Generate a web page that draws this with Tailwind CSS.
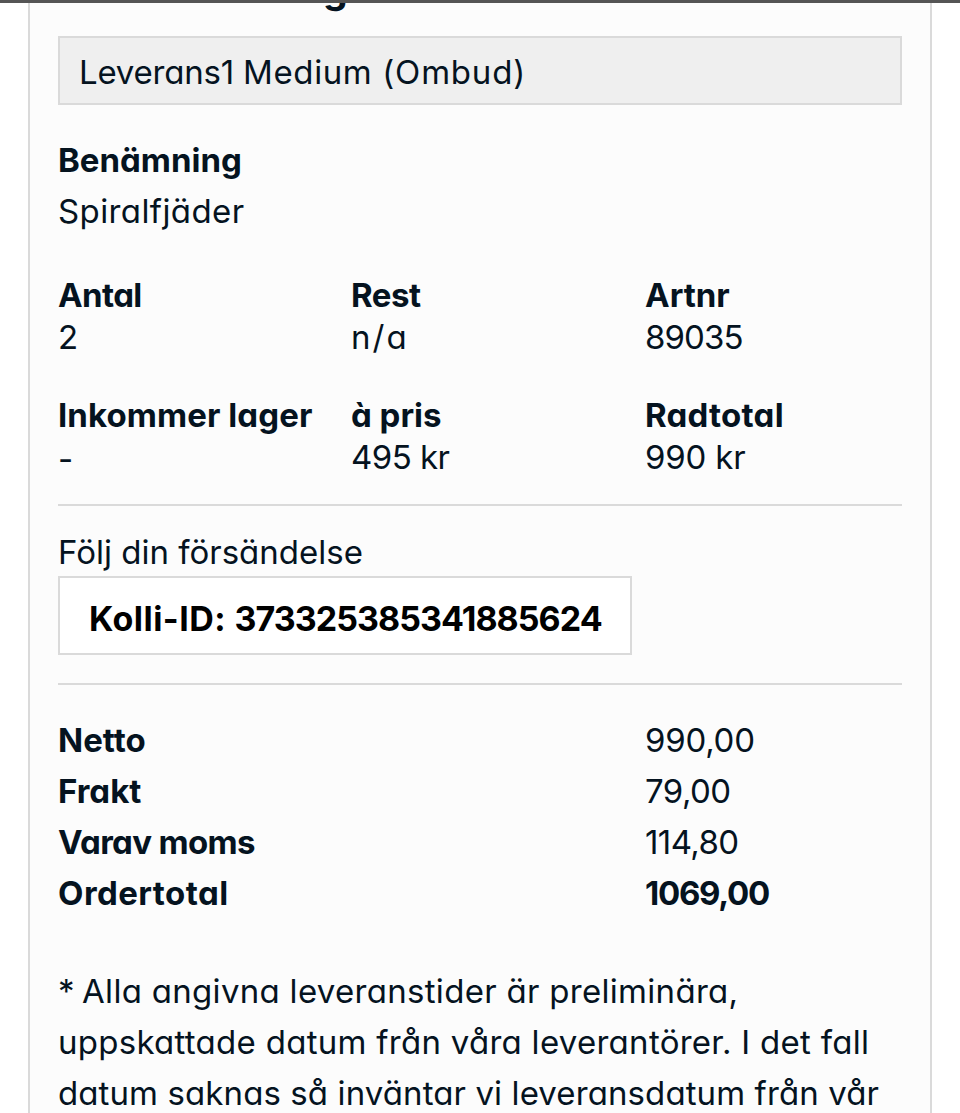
<!DOCTYPE html>
<html lang="sv">
<head>
  <meta charset="UTF-8">
  <meta name="viewport" content="width=device-width, initial-scale=1.0">
  <title>Order</title>
  <script src="https://cdn.jsdelivr.net/npm/@tailwindcss/browser@4"></script>
</head>
<body class="bg-white font-['Inter','Liberation_Sans',sans-serif] [font-feature-settings:'cv11'] text-[33px] leading-[51px] text-[#05131f] h-[1113px] overflow-hidden">
  <div class="h-[1113px] overflow-hidden border-t-3 border-[#555555]">
    <!-- Orderkort -->
    <div class="mx-7 h-[1110px] border-x-2 border-[#dadada] bg-[#fcfcfc] px-7 whitespace-nowrap">
      <!-- Rubrik, bortscrollad under kanten -->
      <div class="flow-root h-[33px] pl-[265px]">
        <h2 class="-mt-[40px] text-[39px] font-bold">g</h2>
      </div>

      <div class="h-[69px] border-2 border-[#dadada] bg-[#efefef] pl-[19px] pt-[9px]"><span class="tracking-[-0.2px]">Leverans1 </span><span class="tracking-[0.6px]">Medium </span><span class="tracking-[0.8px]">(Ombud)</span></div>

      <div class="mt-[30px]">
        <div class="font-bold">Benämning</div>
        <div class="tracking-[0.4px]">Spiralfjäder</div>
      </div>

      <!-- Orderrad -->
      <div class="mt-[37px] grid grid-cols-[293px_294px_1fr] gap-y-9 leading-[42px]">
        <div>
          <div class="font-bold tracking-[-0.6px]">Antal</div>
          <div>2</div>
        </div>
        <div>
          <div class="font-bold tracking-[-0.45px]">Rest</div>
          <div class="tracking-[2px]">n/a</div>
        </div>
        <div>
          <div class="font-bold">Artnr</div>
          <div class="tracking-[-0.9px]">89035</div>
        </div>
        <div>
          <div class="font-bold tracking-[0.08px]">Inkommer lager</div>
          <div class="h-[42px] leading-[46px]">-</div>
        </div>
        <div>
          <div class="font-bold">à pris</div>
          <div class="tracking-[-0.55px]">495 kr</div>
        </div>
        <div>
          <div class="font-bold tracking-[0.25px]">Radtotal</div>
          <div class="tracking-[-0.2px]">990 kr</div>
        </div>
      </div>

      <!-- Spårning -->
      <div class="mt-[26px] h-[181px] border-y-2 border-[#dadada] pt-[21px]">
        <div>Följ din försändelse</div>
        <div class="-mt-[2px] h-[79px] w-[574px] border-2 border-[#dadada] bg-white pl-[29px] pt-[15px] text-[34px] font-bold text-black"><span class="tracking-[0.45px]">Kolli-ID: </span><span class="tracking-[-0.95px]">373325385341885624</span></div>
      </div>

      <!-- Summering -->
      <div class="mt-[30px] grid grid-cols-[587px_1fr]">
        <div class="font-bold">Netto</div>
        <div class="tracking-[-0.25px]">990,00</div>
        <div class="font-bold">Frakt</div>
        <div class="tracking-[-0.55px]">79,00</div>
        <div class="font-bold tracking-[-0.65px]">Varav moms</div>
        <div class="tracking-[-0.6px]">114,80</div>
        <div class="font-bold tracking-[0.45px]">Ordertotal</div>
        <div class="font-bold tracking-[-1.3px]">1069,00</div>
      </div>

      <p class="mt-[47px]">
        <span class="tracking-[-0.9px]">* </span><span class="tracking-[0.3px]">Alla angivna leveranstider är preliminära,</span><br>
        <span class="tracking-[0.28px]">uppskattade datum från våra leverantörer. I det fall</span><br>
        <span class="tracking-[0.1px]">datum saknas så inväntar vi leveransdatum från vår</span>
      </p>
    </div>
  </div>
</body>
</html>
